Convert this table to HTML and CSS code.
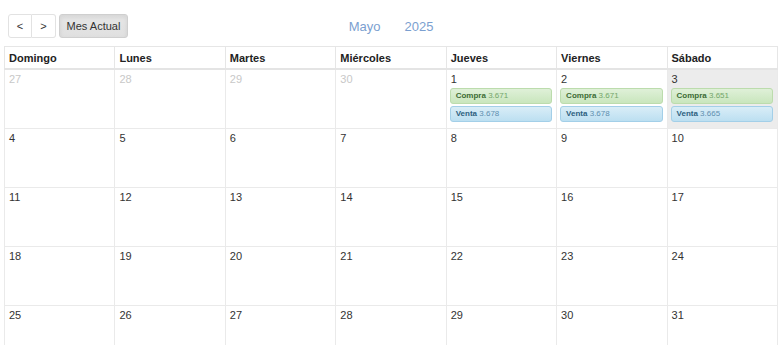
FILE: index.html
```html
<!DOCTYPE html>
<html lang="es">
<head>
<meta charset="utf-8">
<title>Calendario</title>
<link rel="stylesheet" href="styles.css">
</head>
<body>
<div class="toolbar">
  <div class="left">
    <div class="group">
      <button class="btn">&lt;</button><button class="btn">&gt;</button>
    </div>
    <button class="btn active">Mes Actual</button>
  </div>
  <div class="title"><span>Mayo</span><span>2025</span></div>
  <div class="right"></div>
</div>
<table class="cal">
  <thead>
    <tr><th>Domingo</th><th>Lunes</th><th>Martes</th><th>Miércoles</th><th>Jueves</th><th>Viernes</th><th>Sábado</th></tr>
  </thead>
  <tbody>
    <tr>
      <td class="other"><div class="num">27</div></td>
      <td class="other"><div class="num">28</div></td>
      <td class="other"><div class="num">29</div></td>
      <td class="other"><div class="num">30</div></td>
      <td><div class="num">1</div><div class="ev buy"><b>Compra</b> 3.671</div><div class="ev sell"><b>Venta</b> 3.678</div></td>
      <td><div class="num">2</div><div class="ev buy"><b>Compra</b> 3.671</div><div class="ev sell"><b>Venta</b> 3.678</div></td>
      <td class="today"><div class="num">3</div><div class="ev buy"><b>Compra</b> 3.651</div><div class="ev sell"><b>Venta</b> 3.665</div></td>
    </tr>
    <tr><td><div class="num">4</div></td><td><div class="num">5</div></td><td><div class="num">6</div></td><td><div class="num">7</div></td><td><div class="num">8</div></td><td><div class="num">9</div></td><td><div class="num">10</div></td></tr>
    <tr><td><div class="num">11</div></td><td><div class="num">12</div></td><td><div class="num">13</div></td><td><div class="num">14</div></td><td><div class="num">15</div></td><td><div class="num">16</div></td><td><div class="num">17</div></td></tr>
    <tr><td><div class="num">18</div></td><td><div class="num">19</div></td><td><div class="num">20</div></td><td><div class="num">21</div></td><td><div class="num">22</div></td><td><div class="num">23</div></td><td><div class="num">24</div></td></tr>
    <tr><td><div class="num">25</div></td><td><div class="num">26</div></td><td><div class="num">27</div></td><td><div class="num">28</div></td><td><div class="num">29</div></td><td><div class="num">30</div></td><td><div class="num">31</div></td></tr>
  </tbody>
</table>
</body>
</html>
```
FILE: styles.css
```css
html, body {
  margin: 0;
  padding: 0;
  background: #fff;
  font-family: "Liberation Sans", Arial, sans-serif;
  color: #333;
}
body {
  padding: 0 2px 0 4px;
}
.toolbar {
  display: grid;
  grid-template-columns: 1fr auto 1fr;
  align-items: center;
  padding: 14px 0 0 4px;
  height: 24px;
  margin-bottom: 8px;
}
.left {
  display: flex;
  gap: 3px;
}
.group {
  display: flex;
}
.btn {
  font-family: "Liberation Sans", Arial, sans-serif;
  font-size: 11px;
  color: #333;
  height: 24px;
  background: #fff;
  border: 1px solid #e2e2e2;
  padding: 0;
  margin: 0;
  width: 24px;
  line-height: 22px;
}
.group .btn:first-child {
  border-radius: 3px 0 0 3px;
}
.group .btn:last-child {
  border-radius: 0 3px 3px 0;
  border-left: none;
}
.btn.active {
  width: 69px;
  border-radius: 3px;
  background: linear-gradient(#e6e6e6, #e0e0e0);
  border-color: #cfcfcf;
  box-shadow: inset 0 2px 4px rgba(0,0,0,0.08);
}
.title {
  display: flex;
  gap: 24px;
  font-size: 13px;
  color: #7b9fd0;
  transform: translateX(-2px);
}
.cal {
  width: 774px;
  border-collapse: collapse;
  table-layout: fixed;
}
.cal th {
  font-size: 11px;
  font-weight: bold;
  text-align: left;
  padding: 0 4px;
  height: 21px;
  border: 1px solid #e6e6e6;
  border-bottom: 2px solid #e4e4e4;
  color: #222;
}
.cal td {
  border: 1px solid #eaeaea;
  height: 58px;
  vertical-align: top;
  padding: 0;
}
.num {
  font-size: 11px;
  line-height: 13px;
  padding: 3px 4px 2px;
  color: #333;
}
.other .num {
  color: #c8c8c8;
}
.today {
  background: #ececec;
}
.ev {
  margin: 0 4px 2px 3px;
  height: 14px;
  line-height: 14px;
  font-size: 8px;
  padding: 0 5px;
  border-radius: 3px;
  border: 1px solid;
}
.ev b {
  font-weight: bold;
}
.buy {
  background: linear-gradient(#dff0d8, #c9e6bd);
  border-color: #bcdcad;
  color: #73a66a;
}
.buy b {
  color: #3c6b35;
}
.sell {
  background: linear-gradient(#d9edf7, #bcdff1);
  border-color: #a3cfe8;
  color: #5e8fb0;
}
.sell b {
  color: #2d5f80;
}
```
